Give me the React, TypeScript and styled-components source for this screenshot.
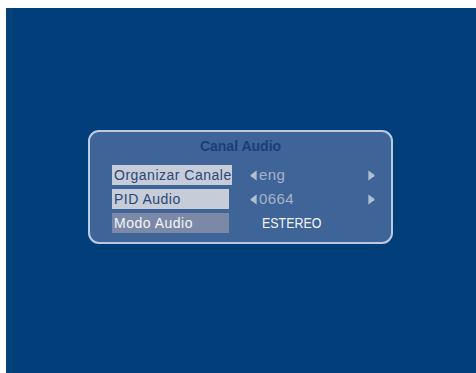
import styled, { createGlobalStyle } from 'styled-components';

const GlobalStyle = createGlobalStyle`
	html, body {
		margin: 0;
		padding: 0;
		background: #ffffff;
	}
	body {
		font-family: 'Liberation Sans', Arial, sans-serif;
	}
`;

const Frame = styled.div`
	padding: 8px 0 0 6px;
	width: 476px;
	height: 373px;
	box-sizing: border-box;
	overflow: hidden;
`;

const Screen = styled.div`
	height: 365px;
	background: #023f7a;
	box-shadow: inset 7px 0 0 #04427c, inset 8px 0 0 #033b74;
	padding: 122px 0 0 82px;
	box-sizing: border-box;
`;

const Panel = styled.div`
	width: 305px;
	height: 114px;
	box-sizing: border-box;
	border: 2px solid #b9cbe3;
	border-radius: 11px;
	background: #3f6498;
	padding: 0 0 0 22px;
`;

const Title = styled.div`
	height: 33px;
	line-height: 29px;
	text-align: center;
	margin-left: -22px;
	font-weight: bold;
	font-size: 14px;
	color: #1a3d7c;
`;

const Rows = styled.div`
	display: flex;
	flex-direction: column;
	gap: 4px;
`;

const Row = styled.div`
	display: flex;
	align-items: center;
	height: 20px;
`;

const Label = styled.div<{ $w: number; $active?: boolean }>`
	width: ${(p) => p.$w}px;
	height: 20px;
	box-sizing: border-box;
	padding-left: 2px;
	line-height: 21px;
	font-size: 14px;
	letter-spacing: 0.5px;
	white-space: nowrap;
	background: ${(p) => (p.$active ? '#7b89a7' : '#c6cdd9')};
	color: ${(p) => (p.$active ? '#f4f6fa' : '#2a4775')};
	margin-right: ${(p) => 138 - p.$w}px;
`;

const Value = styled.div`
	display: flex;
	align-items: center;
	width: 125px;
`;

const ValueText = styled.span`
	flex: 1;
	font-size: 15px;
	letter-spacing: 0.4px;
	color: #a6b3c8;
	padding-left: 2px;
	line-height: 20px;
`;

const PlainValue = styled.span`
	display: inline-block;
	margin-left: 12px;
	font-size: 15px;
	line-height: 20px;
	color: #f2f5fa;
	transform: scaleX(0.83);
	transform-origin: left center;
`;

const Arrow = ({ dir }: { dir: 'left' | 'right' }) => (
	<svg width="7" height="11" viewBox="0 0 7 11" style={{ flex: 'none' }}>
		{dir === 'left' ? (
			<path d="M6.6 0.5 L6.6 10.5 L0.8 6.2 Q0 5.5 0.8 4.8 Z" fill="#b2bfd0" />
		) : (
			<path d="M0.4 0.5 L0.4 10.5 L6.2 6.2 Q7 5.5 6.2 4.8 Z" fill="#b2bfd0" />
		)}
	</svg>
);

const App = () => {
	return (
		<>
			<GlobalStyle />
			<Frame>
				<Screen>
					<Panel>
						<Title>Canal Audio</Title>
						<Rows>
							<Row>
								<Label $w={120}>Organizar Canale</Label>
								<Value>
									<Arrow dir="left" />
									<ValueText>eng</ValueText>
									<Arrow dir="right" />
								</Value>
							</Row>
							<Row>
								<Label $w={117}>PID Audio</Label>
								<Value>
									<Arrow dir="left" />
									<ValueText>0664</ValueText>
									<Arrow dir="right" />
								</Value>
							</Row>
							<Row>
								<Label $w={117} $active>
									Modo Audio
								</Label>
								<Value>
									<PlainValue>ESTEREO</PlainValue>
								</Value>
							</Row>
						</Rows>
					</Panel>
				</Screen>
			</Frame>
		</>
	);
};

export default App;
